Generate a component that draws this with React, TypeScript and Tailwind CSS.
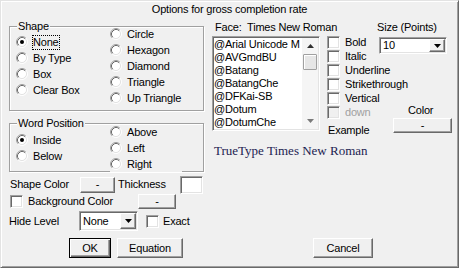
import React from "react";

const RAISED =
  "border border-t-white border-l-white border-r-[#696969] border-b-[#696969] shadow-[inset_-1px_-1px_0_#a0a0a0] bg-[#f0f0f0]";
const SUNKEN =
  "border border-t-[#a0a0a0] border-l-[#a0a0a0] border-r-white border-b-white shadow-[inset_1px_1px_0_#696969,inset_-1px_-1px_0_#e3e3e3]";

function Radio({ checked }: { checked?: boolean }) {
  return (
    <svg width="12" height="12" viewBox="0 0 12 12" className="shrink-0">
      <circle cx="6" cy="6" r="4.5" fill="#fff" />
      <path d="M2.11 9.89A5.5 5.5 0 0 1 9.89 2.11" fill="none" stroke="#a0a0a0" />
      <path d="M9.89 2.11A5.5 5.5 0 0 1 2.11 9.89" fill="none" stroke="#fff" />
      <path d="M2.82 9.18A4.5 4.5 0 0 1 9.18 2.82" fill="none" stroke="#696969" />
      <path d="M9.18 2.82A4.5 4.5 0 0 1 2.82 9.18" fill="none" stroke="#e3e3e3" />
      {checked && <circle cx="6" cy="6" r="2" fill="#000" />}
    </svg>
  );
}

function RadioOpt({
  label,
  checked,
  focus,
  opaque,
}: {
  label: string;
  checked?: boolean;
  focus?: boolean;
  opaque?: boolean;
}) {
  return (
    <div className={`flex h-[16px] items-center ${opaque ? "relative w-[72px] bg-[#f0f0f0]" : ""}`}>
      <Radio checked={checked} />
      <span
        className={`ml-[4px] border whitespace-nowrap ${
          focus ? "border-dotted border-black" : "border-transparent"
        }`}
      >
        {label}
      </span>
    </div>
  );
}

function Check({ disabled, className = "" }: { disabled?: boolean; className?: string }) {
  return (
    <div
      className={`h-[13px] w-[13px] shrink-0 ${disabled ? "bg-[#f0f0f0]" : "bg-white"} ${SUNKEN} ${className}`}
    />
  );
}

function Btn({ children, className = "" }: { children: React.ReactNode; className?: string }) {
  return <div className={`flex items-center justify-center ${RAISED} ${className}`}>{children}</div>;
}

function Arrow({ up, color = "#000" }: { up?: boolean; color?: string }) {
  return (
    <svg width="7" height="4" viewBox="0 0 7 4">
      <polygon points={up ? "0,4 7,4 3.5,0" : "0,0 7,0 3.5,4"} fill={color} />
    </svg>
  );
}

function Combo({ value, className = "", btnH }: { value: string; className?: string; btnH: string }) {
  return (
    <div className={`flex items-center bg-white ${SUNKEN} ${className}`}>
      <span className="flex-1 pl-[3px]">{value}</span>
      <div className={`mr-[1px] flex w-[16px] items-center justify-center ${btnH} ${RAISED}`}>
        <Arrow />
      </div>
    </div>
  );
}

function Group({
  label,
  className,
  children,
}: {
  label: string;
  className: string;
  children: React.ReactNode;
}) {
  return (
    <div
      className={`relative border border-[#a0a0a0] shadow-[inset_1px_1px_0_#fff,1px_1px_0_#fff] ${className}`}
    >
      <span className="absolute left-[7px] top-[-7px] bg-[#f0f0f0] px-[1px] whitespace-nowrap">{label}</span>
      {children}
    </div>
  );
}

const FONTS = ["@Arial Unicode M", "@AVGmdBU", "@Batang", "@BatangChe", "@DFKai-SB", "@Dotum", "@DotumChe"];

function ListBox({ className = "" }: { className?: string }) {
  return (
    <div className={`flex h-[95px] w-[108px] shrink-0 bg-white ${SUNKEN} ${className}`}>
      <div className="flex-1 overflow-hidden pl-[1px] pt-[1px]">
        {FONTS.map((f) => (
          <div key={f} className="h-[13px] whitespace-nowrap">
            {f}
          </div>
        ))}
      </div>
      <div className="my-[1px] mr-[1px] flex w-[16px] flex-col bg-[#f5f5f5]">
        <div className="flex h-[16px] items-center justify-center">
          <Arrow up color="#303030" />
        </div>
        <div className="mx-[1px] h-[16px] rounded-[1px] border border-[#a0a0a0] bg-[#e6e6e6] shadow-[inset_1px_1px_0_#fff]" />
        <div className="flex-1" />
        <div className="flex h-[16px] items-center justify-center">
          <Arrow color="#7a7a7a" />
        </div>
      </div>
    </div>
  );
}

const STYLES: { label: string; disabled?: boolean }[] = [
  { label: "Bold" },
  { label: "Italic" },
  { label: "Underline" },
  { label: "Strikethrough" },
  { label: "Vertical" },
  { label: "down", disabled: true },
];

export default function App() {
  return (
    <div className="box-border h-[268px] w-[459px] overflow-hidden border border-t-[#e3e3e3] border-l-[#e3e3e3] border-r-[#696969] border-b-[#696969] bg-[#f0f0f0] font-['Liberation_Sans',Arial,sans-serif] text-[11px] leading-[13px] tracking-[-0.2px] text-black shadow-[inset_1px_1px_0_#fff,inset_-1px_-1px_0_#a0a0a0] select-none">
      <div className="mt-[2px] h-[13px] text-center">Options for gross completion rate</div>

      <div className="flex items-start">
        {/* left side */}
        <div className="ml-[8px] flex w-[195px] flex-col">
          <Group label="Shape" className="mt-[10px] h-[85px]">
            <div className="flex">
              <div className="ml-[6px] mt-[7px] flex w-[94px] flex-col">
                <RadioOpt label="None" checked focus />
                <RadioOpt label="By Type" />
                <RadioOpt label="Box" />
                <RadioOpt label="Clear Box" />
              </div>
              <div className="mt-[-1px] flex flex-col">
                <RadioOpt label="Circle" />
                <RadioOpt label="Hexagon" />
                <RadioOpt label="Diamond" />
                <RadioOpt label="Triangle" />
                <RadioOpt label="Up Triangle" />
              </div>
            </div>
          </Group>

          <Group label="Word Position" className="mt-[12px] h-[49px]">
            <div className="flex">
              <div className="ml-[6px] mt-[8px] flex w-[94px] flex-col">
                <RadioOpt label="Inside" checked />
                <RadioOpt label="Below" />
              </div>
              <div className="flex flex-col">
                <RadioOpt label="Above" />
                <RadioOpt label="Left" />
                <RadioOpt label="Right" opaque />
              </div>
            </div>
          </Group>

          <div className="mt-[3px] flex h-[19px] items-center">
            <span className="ml-[1px] w-[70px] shrink-0">Shape Color</span>
            <Btn className="h-[16px] w-[35px] shrink-0">-</Btn>
            <span className="ml-[3px] w-[62px] shrink-0">Thickness</span>
            <div className={`h-[18px] w-[23px] shrink-0 bg-white ${SUNKEN}`} />
          </div>

          <div className="flex h-[15px] items-center">
            <Check className="ml-[1px]" />
            <span className="ml-[5px] w-[110px] shrink-0">Background Color</span>
            <Btn className="h-[15px] w-[38px] shrink-0">-</Btn>
          </div>

          <div className="mt-[2px] flex h-[20px] items-center">
            <span className="w-[70px] shrink-0">Hide Level</span>
            <Combo value="None" className="h-[20px] w-[59px] shrink-0" btnH="h-[16px]" />
            <Check className="ml-[8px]" />
            <span className="ml-[4px]">Exact</span>
          </div>
        </div>

        {/* right side */}
        <div className="ml-[8px] flex w-[241px] flex-col">
          <div className="mt-[5px] flex h-[13px]">
            <span className="ml-[3px] w-[162px] shrink-0 whitespace-pre">Face:  Times New Roman</span>
            <span className="whitespace-nowrap">Size (Points)</span>
          </div>

          <div className="mt-[1px] flex items-start">
            <ListBox className="mt-[1px]" />

            <div className="ml-[7px] flex w-[52px] shrink-0 flex-col whitespace-nowrap">
              {STYLES.map((s) => (
                <div key={s.label} className="flex h-[14px] items-center">
                  <Check disabled={s.disabled} />
                  <span className={`ml-[5px] ${s.disabled ? "text-[#a0a0a0]" : ""}`}>{s.label}</span>
                </div>
              ))}
              <span className="ml-[1px] mt-[5px]">Example</span>
            </div>

            <div className="flex w-[74px] flex-col items-start">
              <Combo value="10" className="mt-[2px] h-[17px] w-[68px]" btnH="h-[13px]" />
              <span className="ml-[29px] mt-[50px]">Color</span>
              <Btn className="ml-[14px] mt-[1px] h-[15px] w-[59px] shrink-0">-</Btn>
            </div>
          </div>

          <div className="ml-[2px] mt-[6px] whitespace-nowrap font-['Liberation_Serif','Times_New_Roman',serif] text-[13px] leading-[15px] tracking-normal text-[#1c1c50]">
            TrueType Times New Roman
          </div>
        </div>
      </div>

      <div className="mt-[7px] flex h-[20px]">
        <div className="ml-[68px] flex h-[20px] w-[42px] items-center justify-center border border-black bg-[#f0f0f0] shadow-[inset_1px_1px_0_#fff,inset_-1px_-1px_0_#696969,inset_-2px_-2px_0_#a0a0a0]">
          OK
        </div>
        <Btn className="ml-[6px] h-[20px] w-[66px]">Equation</Btn>
        <Btn className="ml-[130px] h-[20px] w-[60px]">Cancel</Btn>
      </div>
    </div>
  );
}
